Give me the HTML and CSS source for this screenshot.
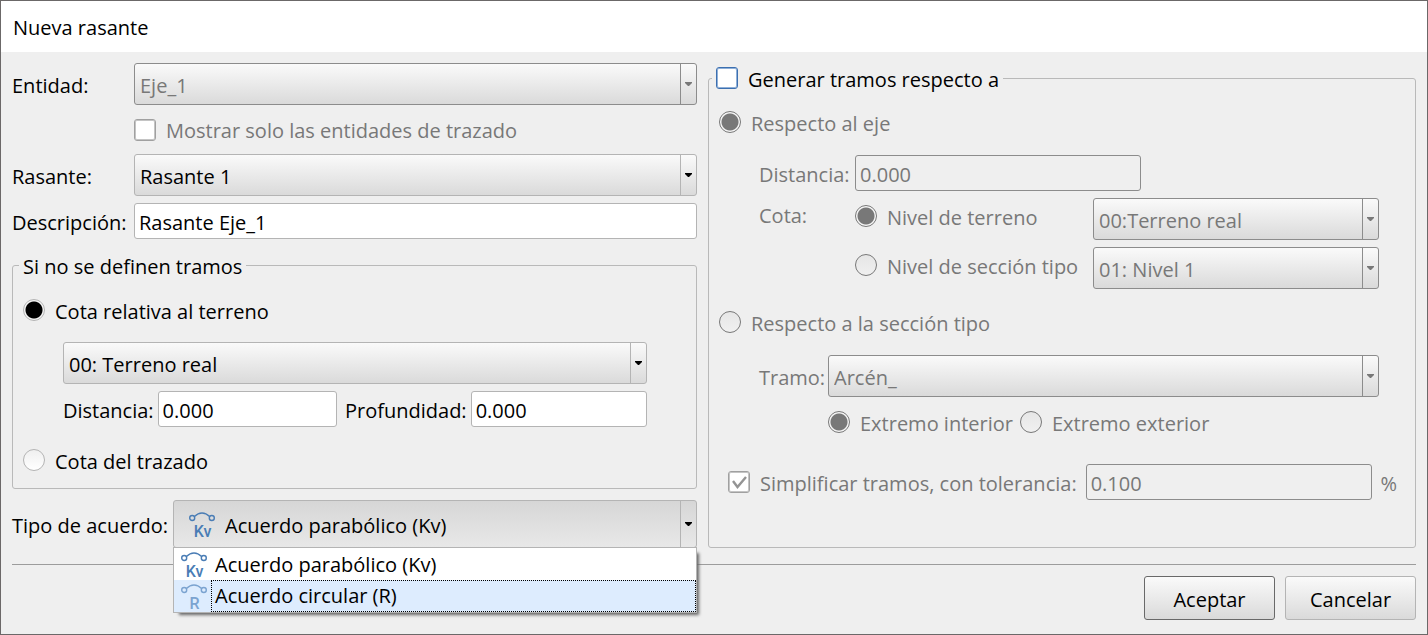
FILE: index.html
```
<!DOCTYPE html>
<html lang="es">
<head>
    <meta charset="UTF-8">
    <meta name="viewport" content="width=device-width, initial-scale=1.0">
    <title>Nueva rasante</title>
    <link rel="stylesheet" href="styles.css">
</head>
<body>
    <!-- Símbolos reutilizables -->
    <svg class="symbols" aria-hidden="true">
        <symbol id="arrow" viewBox="0 0 7 4">
            <path d="M0 0h7v1L4 4H3L0 1z" fill="currentColor"/>
        </symbol>
        <symbol id="curve" viewBox="0 0 26 10">
            <g fill="none" stroke="currentColor" stroke-width="1.4">
                <circle cx="3.2" cy="6" r="2.5"/>
                <circle cx="22.8" cy="6" r="2.5"/>
                <path d="M5.4 4.6C8 2 10 1 13 1s5 1 7.600 3.600"/>
            </g>
        </symbol>
    </svg>

    <form class="dialog">
        <header class="titlebar">
            <h1>Nueva rasante</h1>
        </header>

        <div class="content">
            <div class="columns">
                <!-- Columna izquierda -->
                <div class="left">
                    <div class="main-fields">
                        <label class="caption" for="entidad">Entidad:</label>
                        <div class="combo disabled">
                            <select id="entidad" disabled><option>Eje_1</option></select>
                            <span class="combo-arrow"><svg><use href="#arrow"/></svg></span>
                        </div>

                        <label class="option disabled only-layout">
                            <input type="checkbox" disabled>
                            <span>Mostrar solo las entidades de trazado</span>
                        </label>

                        <label class="caption" for="rasante">Rasante:</label>
                        <div class="combo">
                            <select id="rasante"><option>Rasante 1</option></select>
                            <span class="combo-arrow"><svg><use href="#arrow"/></svg></span>
                        </div>

                        <label class="caption" for="descripcion">Descripción:</label>
                        <input class="text" type="text" id="descripcion" value="Rasante Eje_1">
                    </div>

                    <fieldset class="group">
                        <legend><span>Si no se definen tramos</span></legend>
                        <label class="option">
                            <input type="radio" name="cota" checked>
                            <span>Cota relativa al terreno</span>
                        </label>
                        <div class="ground">
                            <div class="combo">
                                <select aria-label="Terreno"><option>00: Terreno real</option></select>
                                <span class="combo-arrow"><svg><use href="#arrow"/></svg></span>
                            </div>
                            <div class="ground-values">
                                <div class="field">
                                    <label class="caption" for="distancia">Distancia:</label>
                                    <input class="text" type="text" id="distancia" value="0.000">
                                </div>
                                <div class="field">
                                    <label class="caption" for="profundidad">Profundidad:</label>
                                    <input class="text" type="text" id="profundidad" value="0.000">
                                </div>
                            </div>
                        </div>
                        <label class="option">
                            <input type="radio" name="cota">
                            <span>Cota del trazado</span>
                        </label>
                    </fieldset>

                    <div class="curve-row">
                        <label class="caption" for="acuerdo">Tipo de acuerdo:</label>
                        <div class="combo open">
                            <select id="acuerdo">
                                <option>Acuerdo parabólico (Kv)</option>
                                <option>Acuerdo circular (R)</option>
                            </select>
                            <span class="curve-icon"><svg><use href="#curve"/></svg><b>Kv</b></span>
                            <span class="combo-arrow"><svg><use href="#arrow"/></svg></span>
                            <!-- Lista desplegada -->
                            <ul class="popup" role="listbox" aria-label="Tipo de acuerdo">
                                <li role="option" aria-selected="false">
                                    <span class="curve-icon"><svg><use href="#curve"/></svg><b>Kv</b></span>
                                    <span class="popup-text">Acuerdo parabólico (Kv)</span>
                                </li>
                                <li class="selected" role="option" aria-selected="true">
                                    <span class="curve-icon"><svg><use href="#curve"/></svg><b>R</b></span>
                                    <span class="popup-text">Acuerdo circular (R)</span>
                                </li>
                            </ul>
                        </div>
                    </div>
                </div>

                <!-- Columna derecha -->
                <fieldset class="group sections">
                    <legend>
                        <label class="option">
                            <input class="hot" type="checkbox">
                            <span>Generar tramos respecto a</span>
                        </label>
                    </legend>
                    <label class="option disabled">
                        <input type="radio" name="respecto" checked disabled>
                        <span>Respecto al eje</span>
                    </label>
                    <div class="axis disabled">
                        <label class="caption" for="distancia-eje">Distancia:</label>
                        <input class="text axis-distance" type="text" id="distancia-eje" value="0.000" disabled>

                        <span class="axis-cota">Cota:</span>
                        <label class="option">
                            <input type="radio" name="nivel" checked disabled>
                            <span>Nivel de terreno</span>
                        </label>
                        <div class="combo disabled">
                            <select aria-label="Nivel de terreno" disabled><option>00:Terreno real</option></select>
                            <span class="combo-arrow"><svg><use href="#arrow"/></svg></span>
                        </div>

                        <label class="option axis-second">
                            <input type="radio" name="nivel" disabled>
                            <span>Nivel de sección tipo</span>
                        </label>
                        <div class="combo disabled">
                            <select aria-label="Nivel de sección tipo" disabled><option>01: Nivel 1</option></select>
                            <span class="combo-arrow"><svg><use href="#arrow"/></svg></span>
                        </div>
                    </div>
                    <label class="option disabled">
                        <input type="radio" name="respecto" disabled>
                        <span>Respecto a la sección tipo</span>
                    </label>
                    <div class="stretch disabled">
                        <label class="caption" for="tramo">Tramo:</label>
                        <div class="combo disabled">
                            <select id="tramo" disabled><option>Arcén_</option></select>
                            <span class="combo-arrow"><svg><use href="#arrow"/></svg></span>
                        </div>
                        <div class="ends">
                            <label class="option">
                                <input type="radio" name="extremo" checked disabled>
                                <span>Extremo interior</span>
                            </label>
                            <label class="option">
                                <input type="radio" name="extremo" disabled>
                                <span>Extremo exterior</span>
                            </label>
                        </div>
                    </div>
                    <div class="simplify disabled">
                        <label class="option">
                            <input type="checkbox" checked disabled>
                            <span>Simplificar tramos, con tolerancia:</span>
                        </label>
                        <input class="text" type="text" aria-label="Tolerancia" value="0.100" disabled>
                        <span class="caption">%</span>
                    </div>
                </fieldset>
            </div>

            <footer class="buttons">
                <button class="default" type="submit">Aceptar</button>
                <button type="button">Cancelar</button>
            </footer>
        </div>
    </form>
</body>
</html>
```
FILE: styles.css
```
* {
    margin: 0;
    padding: 0;
    box-sizing: border-box;
}
body {
    font-family: "Open Sans", "Noto Sans", sans-serif;
    font-size: 20px;
    line-height: 28px;
    color: #000;
    background: #efefef;
}
input, select, button {
    font: inherit;
    color: inherit;
}
.symbols {
    position: absolute;
    width: 0;
    height: 0;
}

/* Ventana */
.dialog {
    min-height: 100vh;
    border: 1px solid #6b6868;
}
.titlebar {
    padding: 13px 12px 10px;
    background: #fff;
}
.titlebar h1 {
    font-size: 20px;
    font-weight: 400;
}
.content {
    padding: 11px 11px 14px;
}
.columns {
    display: grid;
    grid-template-columns: 685fr 708fr;
    gap: 11px;
}

/* Controles */
.caption {
    padding-top: 4px;
}
.combo {
    position: relative;
    display: grid;
    align-items: stretch;
    min-width: 0;
    height: 42px;
    border: 1px solid #b4b4b4;
    border-radius: 3px;
    background: linear-gradient(#fafafa, #dadada);
}
.combo select {
    grid-area: 1 / 1;
    width: 100%;
    padding: 3px 22px 0 5px;
    appearance: none;
    border: 0;
    background: none;
    opacity: 1;
    outline: none;
}
.combo-arrow {
    grid-area: 1 / 1;
    justify-self: end;
    display: flex;
    align-items: center;
    justify-content: center;
    width: 16px;
    border-left: 1px solid #b4b4b4;
    pointer-events: none;
}
.combo-arrow svg {
    width: 7px;
    height: 4px;
}
.combo.disabled, .combo.disabled .combo-arrow {
    border-color: #8c8c8c;
}
.text {
    width: 100%;
    min-width: 0;
    height: 36px;
    padding: 2px 4px 0;
    border: 1px solid #b4b4b4;
    border-radius: 3px;
    background: #fff;
    outline: none;
}
.text:disabled {
    border-color: #8c8c8c;
    background: #efefef;
}
.disabled {
    color: #787878;
}
.option {
    display: flex;
    align-items: center;
    gap: 10px;
    height: 28px;
    white-space: nowrap;
}
.option span {
    padding-top: 3px;
}
.option input {
    flex: none;
    width: 22px;
    height: 22px;
    appearance: none;
    border: 1px solid #b4b4b4;
    background: #fff;
}
.option input[type="checkbox"] {
    border-color: #a0a0a0;
    border-radius: 3px;
    box-shadow: inset 0 0 0 1px #c4c4c4;
}
.option input.hot {
    border-color: #3c6fb0;
    box-shadow: inset 0 0 0 1px #8fb0d8;
}
.option input[type="checkbox"]:checked {
    background: #fff url("data:image/svg+xml,%3Csvg xmlns='http://www.w3.org/2000/svg' viewBox='0 0 20 20'%3E%3Cpath d='M4 9l4.500 6L17 5' fill='none' stroke='%23949494' stroke-width='2.400'/%3E%3C/svg%3E");
}
.option input[type="radio"] {
    border-radius: 50%;
    background: linear-gradient(#efefef, #fff);
}
.option input[type="radio"]:disabled {
    border-color: #787878;
    background: linear-gradient(#e6e6e6, #f0f0f0);
}
.option input[type="radio"]:checked {
    background: radial-gradient(circle, #000 8px, #f6f6f6 9px);
}
.option input[type="radio"]:checked:disabled {
    background: radial-gradient(circle, #787878 8px, #f6f6f6 9px);
}
.group {
    min-width: 0;
    border: 1px solid #b9b9b9;
    border-radius: 3px;
}
.group legend {
    height: 28px;
    margin-left: -4px;
    padding: 0 4px;
}
.group legend > span {
    display: block;
    padding-top: 2px;
}

/* Columna izquierda */
.left {
    min-width: 0;
}
.main-fields {
    display: grid;
    grid-template-columns: 122px 1fr;
    grid-template-rows: 42px 35px 42px 36px;
    gap: 7px 0;
    align-items: center;
    margin-bottom: 12px;
}
.only-layout {
    grid-column: 2;
}
.left .group {
    margin-bottom: 11px;
    padding: 17px 10px 14px;
}
.ground {
    margin: 18px 39px 19px 40px;
}
.ground-values {
    display: grid;
    grid-template-columns: 274fr 302fr;
    gap: 8px;
    margin-top: 7px;
}
.field {
    display: flex;
    align-items: center;
    gap: 4px;
}
.curve-row {
    display: grid;
    grid-template-columns: auto 1fr;
    gap: 5px;
    align-items: center;
}
.combo.open {
    height: 48px;
    background: linear-gradient(#d6d6d6, #e8e8e8);
}
.combo.open select {
    padding: 4px 22px 0 51px;
}
.combo.open > .curve-icon {
    grid-area: 1 / 1;
    align-self: center;
    margin: 4px 0 0 15px;
    pointer-events: none;
}
.curve-icon {
    display: flex;
    flex-direction: column;
    align-items: center;
    width: 26px;
    height: 28px;
    color: #4a7db5;
}
.curve-icon svg {
    flex: none;
    width: 26px;
    height: 10px;
}
.curve-icon b {
    padding-left: 1px;
    font-family: Roboto, sans-serif;
    font-size: 16px;
    font-weight: 500;
    line-height: 20px;
}
.popup {
    position: absolute;
    top: 46px;
    left: -1px;
    right: -1px;
    z-index: 1;
    list-style: none;
    border: 1px solid #b4b4b4;
    background: #fff;
    box-shadow: 4px 4px 3px -2px #666;
}
.popup li {
    display: flex;
    align-items: center;
    height: 32px;
    padding-left: 7px;
}
.popup .curve-icon {
    margin-top: 3px;
}
.popup-text {
    flex: 1;
    height: 32px;
    margin-left: 4px;
    padding: 1px 0 0 4px;
    line-height: 32px;
}
.popup .selected {
    background: #ddecfe;
}
.popup .selected .curve-icon {
    color: #7ba3d0;
}
.popup .selected .popup-text {
    padding: 0 0 0 3px;
    border: 1px dotted #000;
    line-height: 30px;
}

/* Columna derecha */
.sections {
    margin-top: 1px;
    padding: 16px 36px 0 10px;
}
.sections legend {
    margin-left: -7px;
}
.axis {
    display: grid;
    grid-template-columns: 96px 1fr 286px;
    gap: 7px 0;
    align-items: center;
    margin: 19px 0 19px 40px;
}
.axis .option, .axis-cota {
    margin-bottom: 6px;
}
.axis-distance {
    grid-column: 2 / 4;
    width: 286px;
}
.axis-second {
    grid-column: 2;
}
.stretch {
    display: grid;
    grid-template-columns: 69px 1fr;
    gap: 11px 0;
    align-items: center;
    margin: 19px 0 28px 40px;
}
.ends {
    grid-column: 2;
    display: flex;
    gap: 7px;
}
.simplify {
    display: flex;
    align-items: center;
    gap: 8px;
    margin: 0 -18px 0 9px;
}
.simplify .option {
    margin-right: 1px;
}

/* Botones */
.buttons {
    display: flex;
    justify-content: flex-end;
    gap: 10px;
    margin-top: 16px;
    padding-top: 11px;
    border-top: 1px solid #9c9c9c;
}
.buttons button {
    width: 131px;
    height: 44px;
    padding-top: 3px;
    border: 1px solid #b4b4b4;
    border-radius: 3px;
    background: linear-gradient(#fafafa, #dadada);
}
.buttons .default {
    border-color: #696969;
}
```
